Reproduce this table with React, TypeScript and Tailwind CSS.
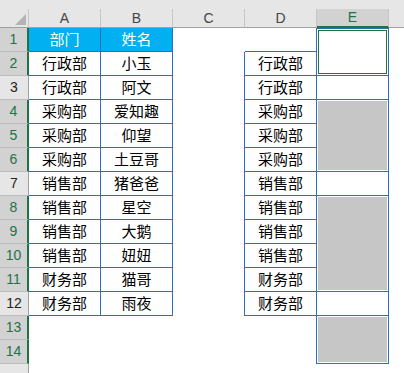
import React from "react";

const cjk = "font-['Noto_Sans_CJK_SC','Noto_Sans',sans-serif]";
const latin = "font-['Liberation_Sans',Arial,sans-serif]";

const people: [string, string][] = [
  ["行政部", "小玉"],
  ["行政部", "阿文"],
  ["采购部", "爱知趣"],
  ["采购部", "仰望"],
  ["采购部", "土豆哥"],
  ["销售部", "猪爸爸"],
  ["销售部", "星空"],
  ["销售部", "大鹅"],
  ["销售部", "妞妞"],
  ["财务部", "猫哥"],
  ["财务部", "雨夜"],
];

const depts = ["行政部", "行政部", "采购部", "采购部", "采购部", "销售部", "销售部", "销售部", "销售部", "财务部", "财务部"];

// merged blocks in column E: rows spanned, filled grey or not
const eBlocks = [
  { span: 2, kind: "active" },
  { span: 1, kind: "empty" },
  { span: 3, kind: "fill" },
  { span: 1, kind: "empty" },
  { span: 4, kind: "fill" },
  { span: 1, kind: "empty" },
  { span: 2, kind: "fill" },
];

const unselected = [3, 7, 12];
const rowNums = Array.from({ length: 14 }, (_, i) => i + 1);

function Cell({ children, className = "" }: { children?: React.ReactNode; className?: string }) {
  return (
    <div className={`h-6 shrink-0 flex items-center justify-center text-[15px] text-black ${cjk} ${className}`}>
      {children}
    </div>
  );
}

function ColHead({ label, active = false }: { label: string; active?: boolean }) {
  return (
    <div
      className={`w-[72px] shrink-0 flex items-center justify-center text-[14px] ${latin} ${
        active
          ? "bg-[#d2d2d2] text-[#217346] border-r border-r-[#c6c6c6] border-b-2 border-b-[#217346]"
          : "bg-[#e6e6e6] text-[#444] border-r border-r-[#c6c6c6] border-b border-b-[#a0a0a0]"
      }`}
    >
      {label}
    </div>
  );
}

export default function App() {
  return (
    <div className="w-[404px] h-[373px] overflow-hidden bg-white flex flex-col">
      <div className="h-[9px] shrink-0 bg-[#e6e6e6]" />

      {/* column headers */}
      <div className="h-[19px] shrink-0 flex">
        <div className="w-[29px] shrink-0 bg-[#e6e6e6] border-r border-r-[#c6c6c6] border-b border-b-[#a0a0a0] flex items-end justify-end pr-[2px] pb-[2px]">
          <svg width="11" height="11" viewBox="0 0 11 11">
            <polygon points="11,0 11,11 0,11" fill="#b4b4b4" />
          </svg>
        </div>
        <ColHead label="A" />
        <ColHead label="B" />
        <ColHead label="C" />
        <ColHead label="D" />
        <ColHead label="E" active />
        <div className="flex-1 bg-[#e6e6e6] border-b border-b-[#a0a0a0]" />
      </div>

      <div className="flex-1 flex">
        {/* row headers */}
        <div className="w-[29px] shrink-0 flex flex-col">
          {rowNums.map((r) => {
            const sel = !unselected.includes(r);
            return (
              <div
                key={r}
                className={`h-6 shrink-0 flex items-center justify-center text-[14px] ${latin} border-b border-b-[#bcbcbc] ${
                  sel
                    ? "bg-[#d2d2d2] text-[#217346] border-r-2 border-r-[#217346]"
                    : "bg-[#e6e6e6] text-[#222] border-r border-r-[#a0a0a0]"
                }`}
              >
                {r}
              </div>
            );
          })}
          <div className="flex-1 bg-[#e6e6e6] border-r border-r-[#a0a0a0]" />
        </div>

        {/* A */}
        <div className="w-[72px] shrink-0 flex flex-col">
          <Cell className="bg-[#00b0f0] !text-white border-r border-b border-[#2a71b8]">部门</Cell>
          {people.map(([d], i) => (
            <Cell key={i} className="border-r border-b border-[#2a71b8]">{d}</Cell>
          ))}
        </div>

        {/* B */}
        <div className="w-[72px] shrink-0 flex flex-col">
          <Cell className="bg-[#00b0f0] !text-white border-r border-b border-[#2a71b8]">姓名</Cell>
          {people.map(([, n], i) => (
            <Cell key={i} className="border-r border-b border-[#2a71b8]">{n}</Cell>
          ))}
        </div>

        {/* C - carries the left edge of the D list */}
        <div className="w-[72px] shrink-0 flex flex-col">
          <Cell />
          {depts.map((_, i) => (
            <Cell key={i} className="border-r border-[#2a71b8]" />
          ))}
        </div>

        {/* D */}
        <div className="w-[72px] shrink-0 flex flex-col">
          <Cell className="border-r border-b border-[#2a71b8]" />
          {depts.map((d, i) => (
            <Cell key={i} className="border-r border-b border-[#2a71b8]">{d}</Cell>
          ))}
          <Cell className="border-r border-[#2a71b8]" />
          <Cell className="border-r border-[#2a71b8]" />
        </div>

        {/* E */}
        <div className="w-[72px] shrink-0 flex flex-col">
          {eBlocks.map((b, i) => {
            const h = b.span === 1 ? "h-6" : b.span === 2 ? "h-12" : b.span === 3 ? "h-[72px]" : "h-24";
            return (
              <div
                key={i}
                className={`${h} shrink-0 p-px border-r border-b border-[#2a71b8] ${i === 0 ? "border-t" : ""}`}
              >
                {b.kind === "active" && <div className="h-full w-full border border-[#217346]" />}
                {b.kind === "fill" && <div className="h-full w-full bg-[#c6c6c6]" />}
              </div>
            );
          })}
        </div>

        <div className="flex-1" />
      </div>
    </div>
  );
}
